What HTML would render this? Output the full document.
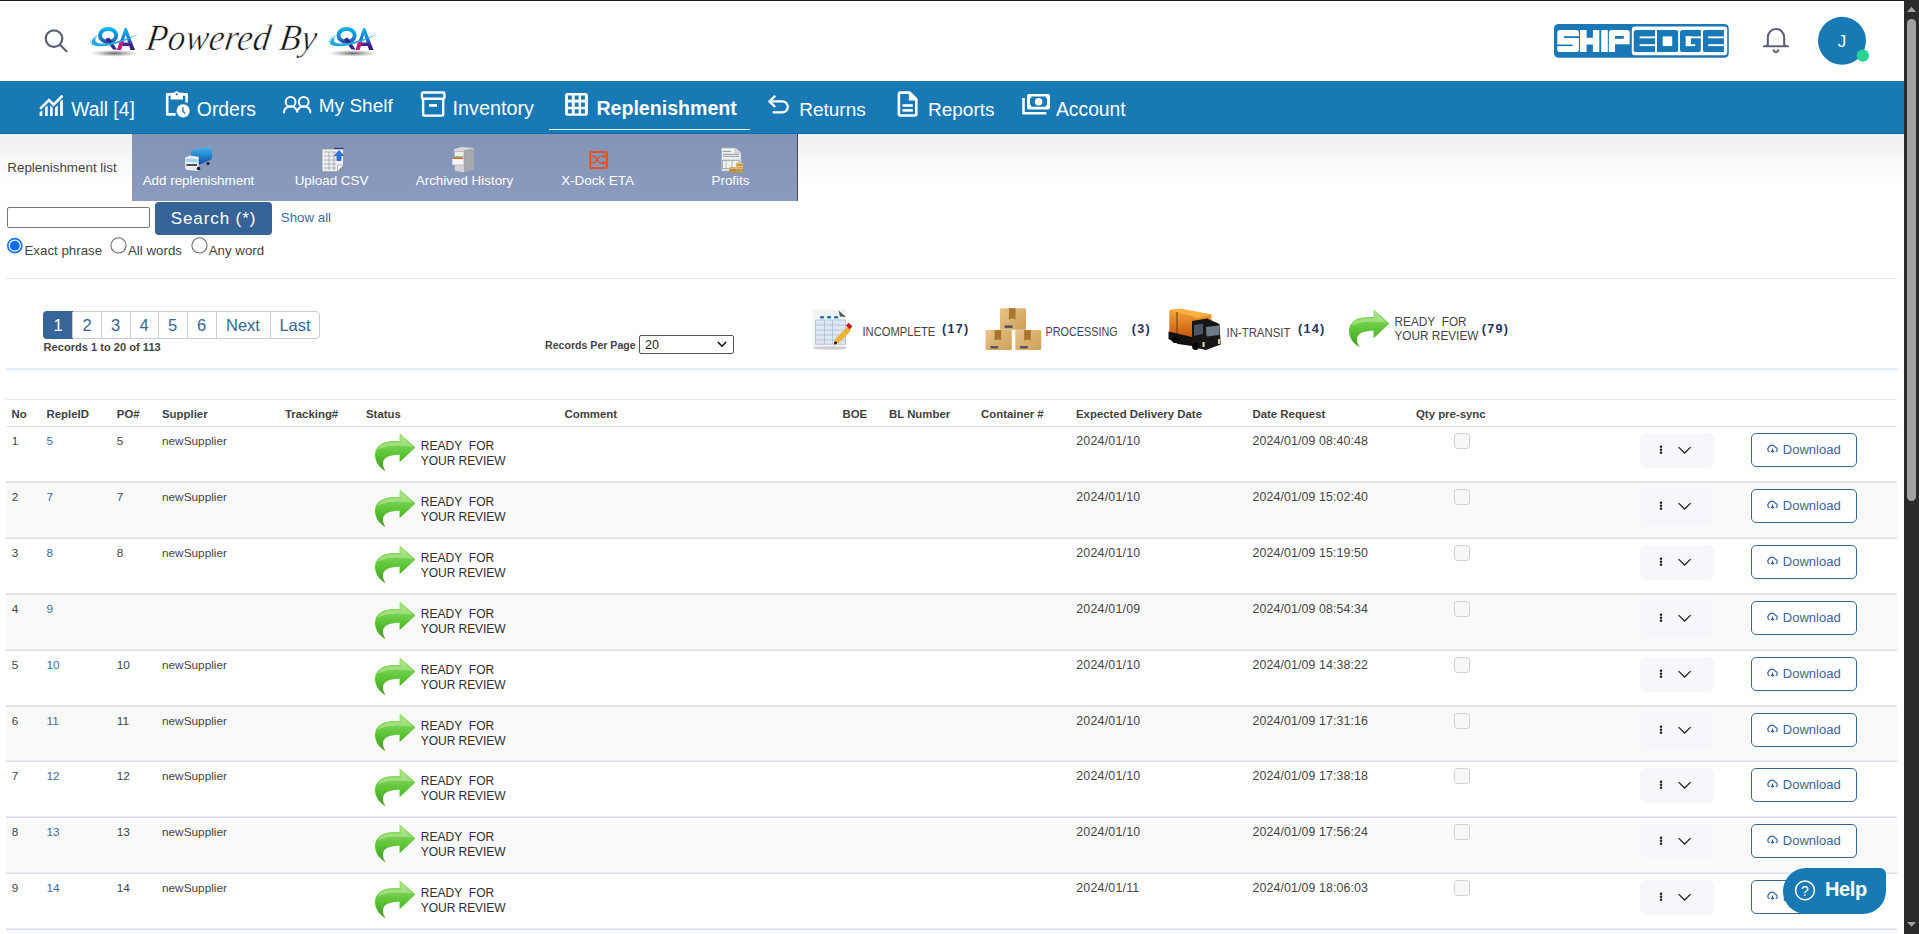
<!DOCTYPE html>
<html><head><meta charset="utf-8"><title>Replenishment</title>
<style>
html,body{margin:0;padding:0;}
body{width:1919px;height:934px;overflow:hidden;position:relative;background:#fff;font-family:"Liberation Sans",sans-serif;}
.t{position:absolute;white-space:nowrap;}
.r{position:absolute;}
svg.ov{position:absolute;left:0;top:0;width:1919px;height:934px;pointer-events:none;}
</style></head><body>

<div class="r" style="left:0px;top:0px;width:1904px;height:1px;background:#1f1f1f"></div>
<div class="r" style="left:0px;top:81px;width:1904px;height:53px;background:#1879b4"></div>
<div class="r" style="left:0px;top:133px;width:1904px;height:1px;background:#0f6ca8"></div>
<div class="r" style="left:549px;top:129px;width:201px;height:1px;background:#fff"></div>
<div class="r" style="left:0px;top:134px;width:1904px;height:48px;background:linear-gradient(#efefef,#ffffff)"></div>
<div class="r" style="left:132px;top:134px;width:665px;height:67px;background:linear-gradient(#8494b6,#8a9bbf)"></div>
<div class="r" style="left:797px;top:134px;width:1px;height:67px;background:#3c4660"></div>
<div class="r" style="left:7px;top:207px;width:143px;height:21px;box-sizing:border-box;border:1px solid #767676;border-radius:2px;background:#fff"></div>
<div class="r" style="left:155px;top:202px;width:117px;height:33px;background:#366499;border-radius:4px"></div>
<div class="r" style="left:6px;top:278px;width:1891px;height:1px;background:#e4eaf2"></div>
<div class="r" style="left:6px;top:368px;width:1891px;height:2px;background:#e4eaf2"></div>
<div class="r" style="left:6px;top:399px;width:1891px;height:1px;background:#e4eaf2"></div>
<div class="r" style="left:43px;top:311px;width:277px;height:28px;box-sizing:border-box;border:1px solid #c8ced6;border-radius:4px;background:#fff"></div>
<div class="r" style="left:43px;top:311px;width:30px;height:28px;background:#36659a;border-radius:4px 0 0 4px"></div>
<div class="r" style="left:101px;top:312px;width:1px;height:26px;background:#c8ced6"></div>
<div class="r" style="left:130px;top:312px;width:1px;height:26px;background:#c8ced6"></div>
<div class="r" style="left:158px;top:312px;width:1px;height:26px;background:#c8ced6"></div>
<div class="r" style="left:187px;top:312px;width:1px;height:26px;background:#c8ced6"></div>
<div class="r" style="left:216px;top:312px;width:1px;height:26px;background:#c8ced6"></div>
<div class="r" style="left:270px;top:312px;width:1px;height:26px;background:#c8ced6"></div>
<div class="r" style="left:72px;top:312px;width:1px;height:26px;background:#c8ced6"></div>
<div class="r" style="left:639px;top:335px;width:95px;height:19px;box-sizing:border-box;border:1px solid #555;border-radius:2px;background:#fff"></div>
<div class="r" style="left:6px;top:426px;width:1891px;height:1px;background:#dee2e6"></div>
<div class="r" style="left:6px;top:481px;width:1891px;height:1px;background:#e5ebf3"></div>
<div class="r" style="left:6px;top:482px;width:1891px;height:1px;background:#dde1e6"></div>
<div class="r" style="left:1454px;top:433px;width:16px;height:16px;box-sizing:border-box;border:1px solid #cfcfcf;border-radius:3.5px;background:#f7f7f7"></div>
<div class="r" style="left:1640px;top:433px;width:74px;height:35px;background:#f5f7fa;border-radius:6px"></div>
<div class="r" style="left:1751px;top:433px;width:106px;height:34px;box-sizing:border-box;border:1.3px solid #36659a;border-radius:5px;background:#fff"></div>
<div class="r" style="left:6px;top:483px;width:1891px;height:54px;background:#f9f9f9"></div>
<div class="r" style="left:6px;top:537px;width:1891px;height:1px;background:#e5ebf3"></div>
<div class="r" style="left:6px;top:538px;width:1891px;height:1px;background:#dde1e6"></div>
<div class="r" style="left:1454px;top:489px;width:16px;height:16px;box-sizing:border-box;border:1px solid #cfcfcf;border-radius:3.5px;background:#f7f7f7"></div>
<div class="r" style="left:1640px;top:489px;width:74px;height:35px;background:#f5f7fa;border-radius:6px"></div>
<div class="r" style="left:1751px;top:489px;width:106px;height:34px;box-sizing:border-box;border:1.3px solid #36659a;border-radius:5px;background:#fff"></div>
<div class="r" style="left:6px;top:593px;width:1891px;height:1px;background:#e5ebf3"></div>
<div class="r" style="left:6px;top:594px;width:1891px;height:1px;background:#dde1e6"></div>
<div class="r" style="left:1454px;top:545px;width:16px;height:16px;box-sizing:border-box;border:1px solid #cfcfcf;border-radius:3.5px;background:#f7f7f7"></div>
<div class="r" style="left:1640px;top:545px;width:74px;height:35px;background:#f5f7fa;border-radius:6px"></div>
<div class="r" style="left:1751px;top:545px;width:106px;height:34px;box-sizing:border-box;border:1.3px solid #36659a;border-radius:5px;background:#fff"></div>
<div class="r" style="left:6px;top:595px;width:1891px;height:54px;background:#f9f9f9"></div>
<div class="r" style="left:6px;top:649px;width:1891px;height:1px;background:#e5ebf3"></div>
<div class="r" style="left:6px;top:650px;width:1891px;height:1px;background:#dde1e6"></div>
<div class="r" style="left:1454px;top:601px;width:16px;height:16px;box-sizing:border-box;border:1px solid #cfcfcf;border-radius:3.5px;background:#f7f7f7"></div>
<div class="r" style="left:1640px;top:601px;width:74px;height:35px;background:#f5f7fa;border-radius:6px"></div>
<div class="r" style="left:1751px;top:601px;width:106px;height:34px;box-sizing:border-box;border:1.3px solid #36659a;border-radius:5px;background:#fff"></div>
<div class="r" style="left:6px;top:705px;width:1891px;height:1px;background:#e5ebf3"></div>
<div class="r" style="left:6px;top:706px;width:1891px;height:1px;background:#dde1e6"></div>
<div class="r" style="left:1454px;top:657px;width:16px;height:16px;box-sizing:border-box;border:1px solid #cfcfcf;border-radius:3.5px;background:#f7f7f7"></div>
<div class="r" style="left:1640px;top:657px;width:74px;height:35px;background:#f5f7fa;border-radius:6px"></div>
<div class="r" style="left:1751px;top:657px;width:106px;height:34px;box-sizing:border-box;border:1.3px solid #36659a;border-radius:5px;background:#fff"></div>
<div class="r" style="left:6px;top:707px;width:1891px;height:53px;background:#f9f9f9"></div>
<div class="r" style="left:6px;top:760px;width:1891px;height:1px;background:#e5ebf3"></div>
<div class="r" style="left:6px;top:761px;width:1891px;height:1px;background:#dde1e6"></div>
<div class="r" style="left:1454px;top:713px;width:16px;height:16px;box-sizing:border-box;border:1px solid #cfcfcf;border-radius:3.5px;background:#f7f7f7"></div>
<div class="r" style="left:1640px;top:713px;width:74px;height:35px;background:#f5f7fa;border-radius:6px"></div>
<div class="r" style="left:1751px;top:713px;width:106px;height:34px;box-sizing:border-box;border:1.3px solid #36659a;border-radius:5px;background:#fff"></div>
<div class="r" style="left:6px;top:816px;width:1891px;height:1px;background:#e5ebf3"></div>
<div class="r" style="left:6px;top:817px;width:1891px;height:1px;background:#dde1e6"></div>
<div class="r" style="left:1454px;top:768px;width:16px;height:16px;box-sizing:border-box;border:1px solid #cfcfcf;border-radius:3.5px;background:#f7f7f7"></div>
<div class="r" style="left:1640px;top:768px;width:74px;height:35px;background:#f5f7fa;border-radius:6px"></div>
<div class="r" style="left:1751px;top:768px;width:106px;height:34px;box-sizing:border-box;border:1.3px solid #36659a;border-radius:5px;background:#fff"></div>
<div class="r" style="left:6px;top:818px;width:1891px;height:54px;background:#f9f9f9"></div>
<div class="r" style="left:6px;top:872px;width:1891px;height:1px;background:#e5ebf3"></div>
<div class="r" style="left:6px;top:873px;width:1891px;height:1px;background:#dde1e6"></div>
<div class="r" style="left:1454px;top:824px;width:16px;height:16px;box-sizing:border-box;border:1px solid #cfcfcf;border-radius:3.5px;background:#f7f7f7"></div>
<div class="r" style="left:1640px;top:824px;width:74px;height:35px;background:#f5f7fa;border-radius:6px"></div>
<div class="r" style="left:1751px;top:824px;width:106px;height:34px;box-sizing:border-box;border:1.3px solid #36659a;border-radius:5px;background:#fff"></div>
<div class="r" style="left:6px;top:928px;width:1891px;height:1px;background:#e5ebf3"></div>
<div class="r" style="left:6px;top:929px;width:1891px;height:1px;background:#dde1e6"></div>
<div class="r" style="left:1454px;top:880px;width:16px;height:16px;box-sizing:border-box;border:1px solid #cfcfcf;border-radius:3.5px;background:#f7f7f7"></div>
<div class="r" style="left:1640px;top:880px;width:74px;height:35px;background:#f5f7fa;border-radius:6px"></div>
<div class="r" style="left:1751px;top:880px;width:106px;height:34px;box-sizing:border-box;border:1.3px solid #36659a;border-radius:5px;background:#fff"></div>
<div class="r" style="left:6px;top:930px;width:1891px;height:54px;background:#f9f9f9"></div>
<div class="r" style="left:6px;top:984px;width:1891px;height:1px;background:#e5ebf3"></div>
<div class="r" style="left:6px;top:985px;width:1891px;height:1px;background:#dde1e6"></div>
<svg class="ov" width="1919" height="934" viewBox="0 0 1919 934"><circle cx="54" cy="38.6" r="8.3" fill="none" stroke="#5d6272" stroke-width="2.3"/><line x1="60.3" y1="45" x2="66.4" y2="51.2" stroke="#5d6272" stroke-width="2.2" stroke-linecap="round"/><defs><linearGradient id="qagrad" gradientUnits="userSpaceOnUse" x1="0" y1="6" x2="0" y2="28"><stop offset="0" stop-color="#06b6ee"/><stop offset="0.5" stop-color="#1a7acb"/><stop offset="0.75" stop-color="#4a2390"/><stop offset="1" stop-color="#2a1f6e"/></linearGradient><radialGradient id="qashadow"><stop offset="0" stop-color="#000" stop-opacity="0.6"/><stop offset="0.5" stop-color="#000" stop-opacity="0.25"/><stop offset="1" stop-color="#000" stop-opacity="0"/></radialGradient></defs><g transform="translate(88,22)"><ellipse cx="26.5" cy="31.3" rx="24" ry="3.4" fill="url(#qashadow)"/><ellipse cx="20.1" cy="13.4" rx="8.1" ry="6.5" fill="none" stroke="url(#qagrad)" stroke-width="4"/><path d="M17.5 17 L21 15.5 L29 27.6 L25 27.6 Z" fill="#2b2a86"/><path fill-rule="evenodd" d="M29.1 27.9 L36.6 6.2 L38.8 6.2 L47 27.9 L42.6 27.9 L41.2 24 H34.2 L32.9 27.9 Z M35.3 20.4 H40.1 L37.7 12.6 Z" fill="url(#qagrad)"/><path d="M29.1 27.9 L31.9 18.6 L35.9 18.6 L32.9 27.9 Z" fill="#e0147e" opacity="0.9"/><path d="M50.9 11.8 C38 19.5, 20 26, 8 24 C1.5 22.8, 2.5 17.5, 9.5 14 C5.5 18, 7 21, 13 21.4 C25 22, 40 16.5, 50.9 11.8 Z" fill="#22aae6"/><path d="M9 13.5 C2 16.5, 1 21.5, 5.5 23.2" fill="none" stroke="#3fc0f0" stroke-width="0.7"/></g><g transform="translate(326.5,22)"><ellipse cx="26.5" cy="31.3" rx="24" ry="3.4" fill="url(#qashadow)"/><ellipse cx="20.1" cy="13.4" rx="8.1" ry="6.5" fill="none" stroke="url(#qagrad)" stroke-width="4"/><path d="M17.5 17 L21 15.5 L29 27.6 L25 27.6 Z" fill="#2b2a86"/><path fill-rule="evenodd" d="M29.1 27.9 L36.6 6.2 L38.8 6.2 L47 27.9 L42.6 27.9 L41.2 24 H34.2 L32.9 27.9 Z M35.3 20.4 H40.1 L37.7 12.6 Z" fill="url(#qagrad)"/><path d="M29.1 27.9 L31.9 18.6 L35.9 18.6 L32.9 27.9 Z" fill="#e0147e" opacity="0.9"/><path d="M50.9 11.8 C38 19.5, 20 26, 8 24 C1.5 22.8, 2.5 17.5, 9.5 14 C5.5 18, 7 21, 13 21.4 C25 22, 40 16.5, 50.9 11.8 Z" fill="#22aae6"/><path d="M9 13.5 C2 16.5, 1 21.5, 5.5 23.2" fill="none" stroke="#3fc0f0" stroke-width="0.7"/></g><rect x="1554" y="24" width="174.8" height="33.7" rx="4.5" fill="#1a78b6"/><rect x="1631.8" y="26.6" width="95.4" height="28.7" rx="3" fill="#fff"/><g fill="#fff"><rect x="1557.3" y="30.1" width="21.6" height="21.9" rx="2.6"/><rect x="1580" y="30.1" width="19.3" height="21.9"/><rect x="1601.2" y="30.1" width="6.6" height="21.9"/><rect x="1608.9" y="30.1" width="20.8" height="21.9" rx="2.6"/><rect x="1608.9" y="45" width="6.1" height="7"/></g><g fill="#1a78b6"><rect x="1564" y="36.2" width="15.5" height="1.8"/><rect x="1557" y="44.5" width="15.6" height="1.6"/><rect x="1586.6" y="29.5" width="6.3" height="8.3"/><rect x="1586.6" y="44.5" width="6.3" height="8"/><rect x="1615" y="36" width="8.8" height="2.8"/><rect x="1615" y="44.3" width="15" height="8.2"/></g><g fill="#1a78b6"><rect x="1633.7" y="29.9" width="21.4" height="22.2" rx="2.6"/><rect x="1640" y="29.9" width="15.1" height="22.2"/><rect x="1657" y="29.9" width="21.4" height="22.2" rx="3.2"/><rect x="1657" y="29.9" width="8" height="22.2"/><rect x="1680" y="29.9" width="20.9" height="22.2" rx="2.6"/><rect x="1690" y="29.9" width="10.9" height="6"/><rect x="1702.8" y="29.9" width="21.1" height="22.2" rx="2.6"/><rect x="1708.2" y="29.9" width="15.7" height="22.2"/></g><g fill="#fff"><rect x="1639.7" y="36.4" width="15.6" height="1.9"/><rect x="1639.7" y="44.2" width="15.6" height="1.9"/><rect x="1662.7" y="36.4" width="9.5" height="9.7"/><rect x="1685.7" y="36.4" width="15.4" height="1.9"/><rect x="1685.7" y="36.4" width="5.2" height="9.7"/><rect x="1685.7" y="44.2" width="9.5" height="1.9"/><rect x="1708.2" y="36.4" width="15.9" height="1.9"/><rect x="1708.2" y="44.2" width="15.9" height="1.9"/><rect x="1655.1" y="29.5" width="1.9" height="23"/><rect x="1678.4" y="29.5" width="1.6" height="23"/><rect x="1700.9" y="29.5" width="1.9" height="23"/></g><path d="M1767.8 44.5 V37.5 A8.2 8.6 0 0 1 1784.2 37.5 V44.5 L1786 46.2 M1764 46.2 H1788 M1766 46.2 L1767.8 44.5" fill="none" stroke="#5d6272" stroke-width="2.1" stroke-linecap="round" stroke-linejoin="round"/><path d="M1773.6 50.3 A2.4 2.2 0 0 0 1778.3 50.3" fill="none" stroke="#5d6272" stroke-width="2" stroke-linecap="round"/><circle cx="1842" cy="40.8" r="24" fill="#1879b4"/><circle cx="1862.8" cy="55.6" r="6.2" fill="#28d391" stroke="#fff" stroke-width="0"/><path d="M40.8 108.2 L49 100 L53.6 104.6 L61.7 96.5" fill="none" stroke="#fff" stroke-width="2.6" stroke-linecap="round" stroke-linejoin="miter"/><path fill="#fff" d="M39.6 116 V112.2 L42.4 110.6 V116 Z M45 116 V107.4 L47.7 105.4 V116 Z M50 116 V105.6 L52.7 107.6 V116 Z M55 116 V107.6 L57.8 105.4 V116 Z M60.1 116 V101.6 L62.9 99.6 V116 Z"/><path d="M170.6 94.4 H167.2 V114.4 H175.6 M182.6 94.4 H186.6 V102.6" fill="none" stroke="#fff" stroke-width="2.6" stroke-linejoin="round"/><path fill="#fff" d="M170.6 92.8 H174.2 A2.8 2.6 0 0 1 179.4 92.8 H183 V99.6 H170.6 Z"/><circle cx="176.8" cy="94.3" r="1.1" fill="#1879b4"/><circle cx="183.1" cy="110.8" r="6.6" fill="#fff"/><path d="M182.9 107.2 V111.2 L185.2 113.4" fill="none" stroke="#1879b4" stroke-width="1.4"/><circle cx="290.6" cy="101.9" r="4.9" fill="none" stroke="#fff" stroke-width="2"/><circle cx="303.7" cy="101.9" r="4.9" fill="none" stroke="#fff" stroke-width="2"/><path d="M284 112.6 A6.6 6.4 0 0 1 297.2 112.6 A6.6 6.4 0 0 1 310.4 112.6" fill="none" stroke="#fff" stroke-width="2" stroke-linecap="round"/><rect x="421.9" y="92.5" width="22.5" height="6.2" rx="1.2" fill="none" stroke="#fff" stroke-width="2.4"/><path d="M423.1 98.7 V114.3 Q423.1 115.6 424.4 115.6 H441.9 Q443.2 115.6 443.2 114.3 V98.7" fill="none" stroke="#fff" stroke-width="2.4"/><rect x="429" y="104.1" width="8" height="2.7" fill="#fff"/><rect x="565.1" y="93" width="22.8" height="22.7" rx="2.2" fill="#fff"/><rect x="567.9" y="95.5" width="3.9" height="4.2" fill="#1879b4"/><rect x="567.9" y="102.6" width="3.9" height="4.2" fill="#1879b4"/><rect x="567.9" y="109.3" width="3.9" height="4.2" fill="#1879b4"/><rect x="574.7" y="95.5" width="3.9" height="4.2" fill="#1879b4"/><rect x="574.7" y="102.6" width="3.9" height="4.2" fill="#1879b4"/><rect x="574.7" y="109.3" width="3.9" height="4.2" fill="#1879b4"/><rect x="581.0" y="95.5" width="3.9" height="4.2" fill="#1879b4"/><rect x="581.0" y="102.6" width="3.9" height="4.2" fill="#1879b4"/><rect x="581.0" y="109.3" width="3.9" height="4.2" fill="#1879b4"/><path d="M775.2 95.8 L769.5 101.4 L775.2 107 M769.5 101.4 H782.4 A5.4 5.45 0 0 1 782.4 112.3 H772.6" fill="none" stroke="#fff" stroke-width="2.3" stroke-linecap="butt" stroke-linejoin="miter"/><path d="M909.8 92.6 H900.4 Q898.9 92.6 898.9 94.1 V114 Q898.9 115.5 900.4 115.5 H914.8 Q916.3 115.5 916.3 114 V99.2 Z" fill="none" stroke="#fff" stroke-width="2.6" stroke-linejoin="round"/><path d="M908.8 92.4 V100.6 H917 Z" fill="#fff"/><rect x="902.4" y="104.2" width="10.4" height="2.6" fill="#fff"/><rect x="902.4" y="109.1" width="10.4" height="2.6" fill="#fff"/><path fill="#fff" fill-rule="evenodd" d="M1029 94 H1048 Q1050 94 1050 96 V107.6 Q1050 109.6 1048 109.6 H1029 Q1027 109.6 1027 107.6 V96 Q1027 94 1029 94 Z M1031.4 96.4 Q1031.4 98.4 1030 98.4 V104.8 Q1031.4 104.8 1031.4 106.8 H1045.7 Q1045.7 104.8 1047.1 104.8 V98.4 Q1045.7 98.4 1045.7 96.4 Z"/><circle cx="1038.6" cy="101.7" r="3.8" fill="#fff"/><path d="M1023.5 97.9 V113.2 H1046.3" fill="none" stroke="#fff" stroke-width="2.6"/><defs><linearGradient id="tbox" x1="0" y1="0" x2="0" y2="1"><stop offset="0" stop-color="#3fb2ee"/><stop offset="1" stop-color="#0a4fa8"/></linearGradient></defs><path d="M191 151.2 L204 147.6 L212 148.6 V159 L199 164.8 L191 164.7 Z" fill="url(#tbox)"/><path d="M185.2 157.5 L190 155.6 L198.7 156.8 V171 L187 170 Q185.2 169.5 185.2 168 Z" fill="#e8ebef"/><path d="M186.3 158.5 L197.5 159.5 V162.5 L186.3 161.7 Z" fill="#9fd3f2"/><path d="M186.5 164 H197 V166 H186.5 Z" fill="#444c58"/><circle cx="198.5" cy="168.5" r="1.8" fill="#222"/><circle cx="208" cy="163.5" r="1.6" fill="#222"/><path d="M322 149 H343.5 V165 L337.5 171.8 H322 Z" fill="#eef0f2" stroke="#8b8f95" stroke-width="0.8"/><path d="M324 152 H336 M324 156 H336 M324 160 H338 M324 164 H336 M324 168 H336 M329 152 V170 M334 152 V170" stroke="#9ca2a8" stroke-width="0.8"/><path d="M337.5 171.8 L343.5 165 H337.5 Z" fill="#ffffff" stroke="#8b8f95" stroke-width="0.6"/><path d="M339 150.5 L343.5 155.5 H341 V160.5 H337 V155.5 H334.5 Z" fill="#1d7fe0" stroke="#3a3fb0" stroke-width="0.7"/><rect x="334" y="147.8" width="9.5" height="1.1" fill="#2a2aa8"/><path d="M454 149 L462 147 L473.9 148 V169 L464 172.3 L455 171 Z" fill="#d9dadd"/><path d="M464 150 L473.9 148.4 V169 L464 172.3 Z" fill="#a5a8ad"/><path d="M454.5 151.5 H464 V156.5 H454.5 Z" fill="#eceef0" stroke="#8f9398" stroke-width="0.5"/><path d="M452 158.5 H464 V165 H452 Z" fill="#f4f5f6" stroke="#8f9398" stroke-width="0.5"/><path d="M453 157.3 H463 V159 H453 Z" fill="#f25c1f"/><path d="M456 156.6 H460 V157.6 H456 Z" fill="#55c23a"/><path d="M455 166.5 H464 V171 H455 Z" fill="#cfd1d4"/><rect x="590.2" y="152.1" width="16.6" height="15.8" rx="1" fill="none" stroke="#e9521f" stroke-width="2"/><path d="M591.2 156.3 H594.3 L599.5 163 H604 M591.2 162.8 H594.3 L599.5 156.3 H604" fill="none" stroke="#e9521f" stroke-width="1.3"/><path d="M603.2 154 L606.2 156.3 L603.2 158.6 Z M603.2 160.6 L606.2 163 L603.2 165.3 Z" fill="#e9521f"/><path d="M721.5 148 H735.5 L741 153 V171 H721.5 Z" fill="#eef2f3" stroke="#a9b0b3" stroke-width="0.7"/><path d="M735.5 148 V153 H741" fill="#d6dcdf" stroke="#a9b0b3" stroke-width="0.5"/><path d="M722.8 151.4 H731 M722.8 154.3 H739 M722.8 156.3 H739" stroke="#6d7377" stroke-width="0.7"/><rect x="722.3" y="160.2" width="16.8" height="8.5" fill="none" stroke="#8b9396" stroke-width="0.8"/><path d="M726 160.2 V168.7 M732 160.2 V168.7" stroke="#8b9396" stroke-width="0.6"/><rect x="736.2" y="162.4" width="6.8" height="10.3" rx="1" fill="#c29a4e"/><rect x="729.2" y="167.3" width="7.2" height="5.5" rx="1" fill="#b98f44"/><path d="M736.2 163.6 H743 M729.2 168.2 H743 M736.2 166.5 H743" stroke="#f0d48c" stroke-width="0.8"/><circle cx="14.8" cy="245.7" r="7" fill="#fff" stroke="#1a73e8" stroke-width="1.7"/><circle cx="14.8" cy="245.7" r="4.9" fill="#0d6efd"/><circle cx="118.5" cy="245.4" r="7.6" fill="#fff" stroke="#6a6a6a" stroke-width="1.1"/><circle cx="199.5" cy="245.4" r="7.6" fill="#fff" stroke="#6a6a6a" stroke-width="1.1"/><path d="M717.8 342 L722 346.2 L726.2 342" fill="none" stroke="#111" stroke-width="1.6"/><defs><linearGradient id="boxg" x1="0" y1="0" x2="1" y2="1"><stop offset="0" stop-color="#e8c48a"/><stop offset="1" stop-color="#cf9f55"/></linearGradient><linearGradient id="arrowg" x1="0" y1="0" x2="0" y2="1"><stop offset="0" stop-color="#9ee07a"/><stop offset="0.55" stop-color="#5cc436"/><stop offset="1" stop-color="#3e9e1c"/></linearGradient><linearGradient id="cargo" x1="0" y1="0" x2="0" y2="1"><stop offset="0" stop-color="#f6a93a"/><stop offset="1" stop-color="#c9560f"/></linearGradient></defs><rect x="812.7" y="309.5" width="33.5" height="39" fill="#f3f3f3"/><ellipse cx="830" cy="348" rx="17" ry="1.6" fill="#bbb" opacity="0.7"/><rect x="815.6" y="320" width="30" height="24.2" fill="#dfe8f2" stroke="#a9bdd3" stroke-width="0.8"/><path d="M815.6 325 H845.6 M815.6 330 H845.6 M815.6 335 H845.6 M815.6 340 H845.6 M824.5 320 V344.2 M832.5 320 V344.2" stroke="#a9bdd3" stroke-width="0.8"/><rect x="820" y="316" width="4.2" height="2.6" rx="1" fill="#1a78c0"/><rect x="827" y="316" width="4.2" height="2.6" rx="1" fill="#1a78c0"/><rect x="834" y="316" width="4.2" height="2.6" rx="1" fill="#1a78c0"/><path d="M838.5 310.5 L846 317 L840 316.5 Z" fill="#555"/><path d="M834.8 339.5 L847.2 327 L851 330.8 L838.6 343.3 L834 344.5 Z" fill="#f0b13a"/><path d="M845.8 325.6 L848.6 322.8 L852.4 326.6 L849.6 329.4 Z" fill="#c21f1f"/><circle cx="835.5" cy="343" r="1.4" fill="#111"/><rect x="1000" y="308.2" width="26" height="21.5" rx="1.2" fill="url(#boxg)"/><path d="M1008.9200000000001 308.2 H1015.52 V319.38 L1012.22 318.305 L1008.9200000000001 319.38 Z" fill="#a8762f"/><rect x="1004.68" y="325.4" width="7.8" height="2.58" fill="#4d5565"/><rect x="985.6" y="330" width="26.2" height="20" rx="1.2" fill="url(#boxg)"/><path d="M994.614 330 H1001.2139999999999 V340.4 L997.914 339.4 L994.614 340.4 Z" fill="#a8762f"/><rect x="990.316" y="346.0" width="7.859999999999999" height="2.4" fill="#4d5565"/><rect x="1015.3" y="330" width="25.9" height="20" rx="1.2" fill="url(#boxg)"/><path d="M1024.173 330 H1030.773 V340.4 L1027.473 339.4 L1024.173 340.4 Z" fill="#a8762f"/><rect x="1019.962" y="346.0" width="7.77" height="2.4" fill="#4d5565"/><path d="M1169.3 310 L1180 308.8 L1211.4 314.5 V331 L1192 337.3 L1169.3 333 Z" fill="url(#cargo)"/><path d="M1169.3 310 L1180 308.8 L1211.4 314.5 L1199 318 Z" fill="#f8b040"/><path d="M1177 312 V334.5" stroke="#6b3a0c" stroke-width="1"/><path d="M1168.5 331.5 L1192 337 V346 L1178 344 L1168.5 339 Z" fill="#111"/><path d="M1192 321 L1207 318.6 L1219.5 324 L1220.7 344.5 L1206 350 L1192 347 Z" fill="#161616"/><path d="M1206 327 L1219 325.5 L1219.5 335 L1206.5 336.5 Z" fill="#6f7a88"/><path d="M1194 325 L1203 323.5 L1203 334 L1194 336 Z" fill="#4b5563"/><circle cx="1175" cy="340" r="3" fill="#000"/><circle cx="1195.5" cy="346.5" r="3.4" fill="#000"/><rect x="1202.5" y="342" width="2.2" height="5" fill="#d9cf9a"/><rect x="1218" y="339" width="2" height="5" fill="#d9cf9a"/><g transform="translate(1349,309.2) scale(1.0)"><path d="M24.6 7.8 L24.6 0 L40.4 14.4 L24.6 29 L24.6 21.5 C16 21.5, 8.6 23.4, 8 29.6 C7.8 33, 9 36, 10.8 38.3 C4 34.2, 0 28.5, 0 21.6 C0 13, 8 7.8, 18 7.8 Z" fill="url(#arrowg)"/><path d="M2.5 17 C5 11, 10 9.2, 18 9.2 L25.6 9.2 L25.6 2.4 L37.5 13.4 L25.6 12.6 C16 12.4, 7 13.6, 2.5 17 Z" fill="#c4f0a2" opacity="0.5"/></g><g transform="translate(375,433.2) scale(1.0)"><path d="M24.6 7.8 L24.6 0 L40.4 14.4 L24.6 29 L24.6 21.5 C16 21.5, 8.6 23.4, 8 29.6 C7.8 33, 9 36, 10.8 38.3 C4 34.2, 0 28.5, 0 21.6 C0 13, 8 7.8, 18 7.8 Z" fill="url(#arrowg)"/><path d="M2.5 17 C5 11, 10 9.2, 18 9.2 L25.6 9.2 L25.6 2.4 L37.5 13.4 L25.6 12.6 C16 12.4, 7 13.6, 2.5 17 Z" fill="#c4f0a2" opacity="0.5"/></g><circle cx="1661" cy="446.8" r="1.25" fill="#222"/><circle cx="1661" cy="449.7" r="1.25" fill="#222"/><circle cx="1661" cy="452.7" r="1.25" fill="#222"/><path d="M1678.6 447.1 L1684.6 453 L1690.6 447.1" fill="none" stroke="#222" stroke-width="1.3"/><path d="M1769.5 451.8 A2.6 2.6 0 0 1 1768.6 447.5 A3.6 3.6 0 0 1 1775.4 447.4 A2.3 2.3 0 0 1 1775.8 451.8" fill="none" stroke="#36659a" stroke-width="1.2"/><path d="M1772.5 448.5 V452.2 M1770.8 450.6 L1772.5 452.3 L1774.2 450.6" fill="none" stroke="#36659a" stroke-width="1.1"/><g transform="translate(375,489.2) scale(1.0)"><path d="M24.6 7.8 L24.6 0 L40.4 14.4 L24.6 29 L24.6 21.5 C16 21.5, 8.6 23.4, 8 29.6 C7.8 33, 9 36, 10.8 38.3 C4 34.2, 0 28.5, 0 21.6 C0 13, 8 7.8, 18 7.8 Z" fill="url(#arrowg)"/><path d="M2.5 17 C5 11, 10 9.2, 18 9.2 L25.6 9.2 L25.6 2.4 L37.5 13.4 L25.6 12.6 C16 12.4, 7 13.6, 2.5 17 Z" fill="#c4f0a2" opacity="0.5"/></g><circle cx="1661" cy="502.8" r="1.25" fill="#222"/><circle cx="1661" cy="505.7" r="1.25" fill="#222"/><circle cx="1661" cy="508.7" r="1.25" fill="#222"/><path d="M1678.6 503.1 L1684.6 509 L1690.6 503.1" fill="none" stroke="#222" stroke-width="1.3"/><path d="M1769.5 507.8 A2.6 2.6 0 0 1 1768.6 503.5 A3.6 3.6 0 0 1 1775.4 503.4 A2.3 2.3 0 0 1 1775.8 507.8" fill="none" stroke="#36659a" stroke-width="1.2"/><path d="M1772.5 504.5 V508.2 M1770.8 506.6 L1772.5 508.3 L1774.2 506.6" fill="none" stroke="#36659a" stroke-width="1.1"/><g transform="translate(375,545.2) scale(1.0)"><path d="M24.6 7.8 L24.6 0 L40.4 14.4 L24.6 29 L24.6 21.5 C16 21.5, 8.6 23.4, 8 29.6 C7.8 33, 9 36, 10.8 38.3 C4 34.2, 0 28.5, 0 21.6 C0 13, 8 7.8, 18 7.8 Z" fill="url(#arrowg)"/><path d="M2.5 17 C5 11, 10 9.2, 18 9.2 L25.6 9.2 L25.6 2.4 L37.5 13.4 L25.6 12.6 C16 12.4, 7 13.6, 2.5 17 Z" fill="#c4f0a2" opacity="0.5"/></g><circle cx="1661" cy="558.8" r="1.25" fill="#222"/><circle cx="1661" cy="561.7" r="1.25" fill="#222"/><circle cx="1661" cy="564.7" r="1.25" fill="#222"/><path d="M1678.6 559.1 L1684.6 565 L1690.6 559.1" fill="none" stroke="#222" stroke-width="1.3"/><path d="M1769.5 563.8 A2.6 2.6 0 0 1 1768.6 559.5 A3.6 3.6 0 0 1 1775.4 559.4 A2.3 2.3 0 0 1 1775.8 563.8" fill="none" stroke="#36659a" stroke-width="1.2"/><path d="M1772.5 560.5 V564.2 M1770.8 562.6 L1772.5 564.3 L1774.2 562.6" fill="none" stroke="#36659a" stroke-width="1.1"/><g transform="translate(375,601.2) scale(1.0)"><path d="M24.6 7.8 L24.6 0 L40.4 14.4 L24.6 29 L24.6 21.5 C16 21.5, 8.6 23.4, 8 29.6 C7.8 33, 9 36, 10.8 38.3 C4 34.2, 0 28.5, 0 21.6 C0 13, 8 7.8, 18 7.8 Z" fill="url(#arrowg)"/><path d="M2.5 17 C5 11, 10 9.2, 18 9.2 L25.6 9.2 L25.6 2.4 L37.5 13.4 L25.6 12.6 C16 12.4, 7 13.6, 2.5 17 Z" fill="#c4f0a2" opacity="0.5"/></g><circle cx="1661" cy="614.8" r="1.25" fill="#222"/><circle cx="1661" cy="617.7" r="1.25" fill="#222"/><circle cx="1661" cy="620.7" r="1.25" fill="#222"/><path d="M1678.6 615.1 L1684.6 621 L1690.6 615.1" fill="none" stroke="#222" stroke-width="1.3"/><path d="M1769.5 619.8 A2.6 2.6 0 0 1 1768.6 615.5 A3.6 3.6 0 0 1 1775.4 615.4 A2.3 2.3 0 0 1 1775.8 619.8" fill="none" stroke="#36659a" stroke-width="1.2"/><path d="M1772.5 616.5 V620.2 M1770.8 618.6 L1772.5 620.3 L1774.2 618.6" fill="none" stroke="#36659a" stroke-width="1.1"/><g transform="translate(375,657.2) scale(1.0)"><path d="M24.6 7.8 L24.6 0 L40.4 14.4 L24.6 29 L24.6 21.5 C16 21.5, 8.6 23.4, 8 29.6 C7.8 33, 9 36, 10.8 38.3 C4 34.2, 0 28.5, 0 21.6 C0 13, 8 7.8, 18 7.8 Z" fill="url(#arrowg)"/><path d="M2.5 17 C5 11, 10 9.2, 18 9.2 L25.6 9.2 L25.6 2.4 L37.5 13.4 L25.6 12.6 C16 12.4, 7 13.6, 2.5 17 Z" fill="#c4f0a2" opacity="0.5"/></g><circle cx="1661" cy="670.8" r="1.25" fill="#222"/><circle cx="1661" cy="673.7" r="1.25" fill="#222"/><circle cx="1661" cy="676.7" r="1.25" fill="#222"/><path d="M1678.6 671.1 L1684.6 677 L1690.6 671.1" fill="none" stroke="#222" stroke-width="1.3"/><path d="M1769.5 675.8 A2.6 2.6 0 0 1 1768.6 671.5 A3.6 3.6 0 0 1 1775.4 671.4 A2.3 2.3 0 0 1 1775.8 675.8" fill="none" stroke="#36659a" stroke-width="1.2"/><path d="M1772.5 672.5 V676.2 M1770.8 674.6 L1772.5 676.3 L1774.2 674.6" fill="none" stroke="#36659a" stroke-width="1.1"/><g transform="translate(375,713.2) scale(1.0)"><path d="M24.6 7.8 L24.6 0 L40.4 14.4 L24.6 29 L24.6 21.5 C16 21.5, 8.6 23.4, 8 29.6 C7.8 33, 9 36, 10.8 38.3 C4 34.2, 0 28.5, 0 21.6 C0 13, 8 7.8, 18 7.8 Z" fill="url(#arrowg)"/><path d="M2.5 17 C5 11, 10 9.2, 18 9.2 L25.6 9.2 L25.6 2.4 L37.5 13.4 L25.6 12.6 C16 12.4, 7 13.6, 2.5 17 Z" fill="#c4f0a2" opacity="0.5"/></g><circle cx="1661" cy="726.8" r="1.25" fill="#222"/><circle cx="1661" cy="729.7" r="1.25" fill="#222"/><circle cx="1661" cy="732.7" r="1.25" fill="#222"/><path d="M1678.6 727.1 L1684.6 733 L1690.6 727.1" fill="none" stroke="#222" stroke-width="1.3"/><path d="M1769.5 731.8 A2.6 2.6 0 0 1 1768.6 727.5 A3.6 3.6 0 0 1 1775.4 727.4 A2.3 2.3 0 0 1 1775.8 731.8" fill="none" stroke="#36659a" stroke-width="1.2"/><path d="M1772.5 728.5 V732.2 M1770.8 730.6 L1772.5 732.3 L1774.2 730.6" fill="none" stroke="#36659a" stroke-width="1.1"/><g transform="translate(375,768.2) scale(1.0)"><path d="M24.6 7.8 L24.6 0 L40.4 14.4 L24.6 29 L24.6 21.5 C16 21.5, 8.6 23.4, 8 29.6 C7.8 33, 9 36, 10.8 38.3 C4 34.2, 0 28.5, 0 21.6 C0 13, 8 7.8, 18 7.8 Z" fill="url(#arrowg)"/><path d="M2.5 17 C5 11, 10 9.2, 18 9.2 L25.6 9.2 L25.6 2.4 L37.5 13.4 L25.6 12.6 C16 12.4, 7 13.6, 2.5 17 Z" fill="#c4f0a2" opacity="0.5"/></g><circle cx="1661" cy="781.8" r="1.25" fill="#222"/><circle cx="1661" cy="784.7" r="1.25" fill="#222"/><circle cx="1661" cy="787.7" r="1.25" fill="#222"/><path d="M1678.6 782.1 L1684.6 788 L1690.6 782.1" fill="none" stroke="#222" stroke-width="1.3"/><path d="M1769.5 786.8 A2.6 2.6 0 0 1 1768.6 782.5 A3.6 3.6 0 0 1 1775.4 782.4 A2.3 2.3 0 0 1 1775.8 786.8" fill="none" stroke="#36659a" stroke-width="1.2"/><path d="M1772.5 783.5 V787.2 M1770.8 785.6 L1772.5 787.3 L1774.2 785.6" fill="none" stroke="#36659a" stroke-width="1.1"/><g transform="translate(375,824.2) scale(1.0)"><path d="M24.6 7.8 L24.6 0 L40.4 14.4 L24.6 29 L24.6 21.5 C16 21.5, 8.6 23.4, 8 29.6 C7.8 33, 9 36, 10.8 38.3 C4 34.2, 0 28.5, 0 21.6 C0 13, 8 7.8, 18 7.8 Z" fill="url(#arrowg)"/><path d="M2.5 17 C5 11, 10 9.2, 18 9.2 L25.6 9.2 L25.6 2.4 L37.5 13.4 L25.6 12.6 C16 12.4, 7 13.6, 2.5 17 Z" fill="#c4f0a2" opacity="0.5"/></g><circle cx="1661" cy="837.8" r="1.25" fill="#222"/><circle cx="1661" cy="840.7" r="1.25" fill="#222"/><circle cx="1661" cy="843.7" r="1.25" fill="#222"/><path d="M1678.6 838.1 L1684.6 844 L1690.6 838.1" fill="none" stroke="#222" stroke-width="1.3"/><path d="M1769.5 842.8 A2.6 2.6 0 0 1 1768.6 838.5 A3.6 3.6 0 0 1 1775.4 838.4 A2.3 2.3 0 0 1 1775.8 842.8" fill="none" stroke="#36659a" stroke-width="1.2"/><path d="M1772.5 839.5 V843.2 M1770.8 841.6 L1772.5 843.3 L1774.2 841.6" fill="none" stroke="#36659a" stroke-width="1.1"/><g transform="translate(375,880.2) scale(1.0)"><path d="M24.6 7.8 L24.6 0 L40.4 14.4 L24.6 29 L24.6 21.5 C16 21.5, 8.6 23.4, 8 29.6 C7.8 33, 9 36, 10.8 38.3 C4 34.2, 0 28.5, 0 21.6 C0 13, 8 7.8, 18 7.8 Z" fill="url(#arrowg)"/><path d="M2.5 17 C5 11, 10 9.2, 18 9.2 L25.6 9.2 L25.6 2.4 L37.5 13.4 L25.6 12.6 C16 12.4, 7 13.6, 2.5 17 Z" fill="#c4f0a2" opacity="0.5"/></g><circle cx="1661" cy="893.8" r="1.25" fill="#222"/><circle cx="1661" cy="896.7" r="1.25" fill="#222"/><circle cx="1661" cy="899.7" r="1.25" fill="#222"/><path d="M1678.6 894.1 L1684.6 900 L1690.6 894.1" fill="none" stroke="#222" stroke-width="1.3"/><path d="M1769.5 898.8 A2.6 2.6 0 0 1 1768.6 894.5 A3.6 3.6 0 0 1 1775.4 894.4 A2.3 2.3 0 0 1 1775.8 898.8" fill="none" stroke="#36659a" stroke-width="1.2"/><path d="M1772.5 895.5 V899.2 M1770.8 897.6 L1772.5 899.3 L1774.2 897.6" fill="none" stroke="#36659a" stroke-width="1.1"/></svg>
<div class="t" style="left:150px;top:16px;font-family:'Liberation Serif',serif;font-style:italic;font-size:37px;line-height:44px;color:#111;-webkit-text-stroke:0.55px #fff;letter-spacing:0.5px;transform:skewX(-8deg) scaleX(0.93);transform-origin:left top;">Powered By</div>
<div class="t" style="left:1542px;width:600px;text-align:center;top:32.61px;font-size:17px;line-height:17px;font-weight:400;color:#fff;">J</div>
<div class="t" style="left:71.2px;top:99.66px;font-size:19.3px;line-height:19.3px;font-weight:400;color:#ffffff;">Wall [4]</div>
<div class="t" style="left:196.8px;top:99.58px;font-size:19.4px;line-height:19.4px;font-weight:400;color:#ffffff;">Orders</div>
<div class="t" style="left:318.8px;top:95.92px;font-size:19px;line-height:19px;font-weight:400;color:#ffffff;">My Shelf</div>
<div class="t" style="left:452.6px;top:99.24px;font-size:19.8px;line-height:19.8px;font-weight:400;color:#ffffff;">Inventory</div>
<div class="t" style="left:596.4px;top:99.41px;font-size:19.6px;line-height:19.6px;font-weight:700;color:#ffffff;">Replenishment</div>
<div class="t" style="left:799.2px;top:99.92px;font-size:19px;line-height:19px;font-weight:400;color:#ffffff;">Returns</div>
<div class="t" style="left:928px;top:99.92px;font-size:19px;line-height:19px;font-weight:400;color:#ffffff;">Reports</div>
<div class="t" style="left:1056px;top:99.66px;font-size:19.3px;line-height:19.3px;font-weight:400;color:#ffffff;">Account</div>
<div class="t" style="left:7.3px;top:160.56px;font-size:13.4px;line-height:13.4px;font-weight:400;color:#444;">Replenishment list</div>
<div class="t" style="left:-101.5px;width:600px;text-align:center;top:173.66px;font-size:13.4px;line-height:13.4px;font-weight:400;color:#fff;">Add replenishment</div>
<div class="t" style="left:31.5px;width:600px;text-align:center;top:173.66px;font-size:13.4px;line-height:13.4px;font-weight:400;color:#fff;">Upload CSV</div>
<div class="t" style="left:164.5px;width:600px;text-align:center;top:173.66px;font-size:13.4px;line-height:13.4px;font-weight:400;color:#fff;">Archived History</div>
<div class="t" style="left:297.5px;width:600px;text-align:center;top:173.66px;font-size:13.4px;line-height:13.4px;font-weight:400;color:#fff;">X-Dock ETA</div>
<div class="t" style="left:430.5px;width:600px;text-align:center;top:173.66px;font-size:13.4px;line-height:13.4px;font-weight:400;color:#fff;">Profits</div>
<div class="t" style="left:-86.5px;width:600px;text-align:center;top:209.81px;font-size:17px;line-height:17px;font-weight:400;color:#fff;letter-spacing:0.9px;">Search (*)</div>
<div class="t" style="left:280.8px;top:210.74px;font-size:13.3px;line-height:13.3px;font-weight:400;color:#3b6ca3;">Show all</div>
<div class="t" style="left:24.5px;top:244.24px;font-size:13.3px;line-height:13.3px;font-weight:400;color:#444;">Exact phrase</div>
<div class="t" style="left:128px;top:244.24px;font-size:13.3px;line-height:13.3px;font-weight:400;color:#444;">All words</div>
<div class="t" style="left:208.7px;top:244.24px;font-size:13.3px;line-height:13.3px;font-weight:400;color:#444;">Any word</div>
<div class="t" style="left:-242.0px;width:600px;text-align:center;top:316.53px;font-size:16.5px;line-height:16.5px;font-weight:400;color:#fff;">1</div>
<div class="t" style="left:-213.0px;width:600px;text-align:center;top:316.53px;font-size:16.5px;line-height:16.5px;font-weight:400;color:#36659a;">2</div>
<div class="t" style="left:-184.5px;width:600px;text-align:center;top:316.53px;font-size:16.5px;line-height:16.5px;font-weight:400;color:#36659a;">3</div>
<div class="t" style="left:-156.0px;width:600px;text-align:center;top:316.53px;font-size:16.5px;line-height:16.5px;font-weight:400;color:#36659a;">4</div>
<div class="t" style="left:-127.5px;width:600px;text-align:center;top:316.53px;font-size:16.5px;line-height:16.5px;font-weight:400;color:#36659a;">5</div>
<div class="t" style="left:-98.5px;width:600px;text-align:center;top:316.53px;font-size:16.5px;line-height:16.5px;font-weight:400;color:#36659a;">6</div>
<div class="t" style="left:-57.0px;width:600px;text-align:center;top:316.53px;font-size:16.5px;line-height:16.5px;font-weight:400;color:#36659a;">Next</div>
<div class="t" style="left:-5.0px;width:600px;text-align:center;top:316.53px;font-size:16.5px;line-height:16.5px;font-weight:400;color:#36659a;">Last</div>
<div class="t" style="left:43.6px;top:342.20px;font-size:11.1px;line-height:11.1px;font-weight:700;color:#444;">Records 1 to 20 of 113</div>
<div class="t" style="left:545px;top:339.73px;font-size:10.6px;line-height:10.6px;font-weight:700;color:#444;">Records Per Page</div>
<div class="t" style="left:645px;top:339.42px;font-size:12.5px;line-height:12.5px;font-weight:400;color:#222;">20</div>
<div class="t" style="left:862.5px;top:326.82px;font-size:11.2px;line-height:11.2px;font-weight:400;color:#444;transform:scaleY(1.15);transform-origin:left bottom;">INCOMPLETE</div>
<div class="t" style="left:942px;top:323.33px;font-size:12.6px;line-height:12.6px;font-weight:700;color:#1f3560;letter-spacing:1.3px;">(17)</div>
<div class="t" style="left:1045.6px;top:326.66px;font-size:10.8px;line-height:10.8px;font-weight:400;color:#444;transform:scaleY(1.15);transform-origin:left bottom;">PROCESSING</div>
<div class="t" style="left:1131.7px;top:323.33px;font-size:12.6px;line-height:12.6px;font-weight:700;color:#1f3560;letter-spacing:1.3px;">(3)</div>
<div class="t" style="left:1226.5px;top:327.55px;font-size:11.4px;line-height:11.4px;font-weight:400;color:#444;transform:scaleY(1.15);transform-origin:left bottom;">IN-TRANSIT</div>
<div class="t" style="left:1298px;top:323.33px;font-size:12.6px;line-height:12.6px;font-weight:700;color:#1f3560;letter-spacing:1.3px;">(14)</div>
<div class="t" style="left:1394.5px;top:316.51px;font-size:11.8px;line-height:11.8px;font-weight:400;color:#444;transform:scaleY(1.15);transform-origin:left bottom;">READY&nbsp;&nbsp;FOR</div>
<div class="t" style="left:1394.5px;top:331.41px;font-size:11.8px;line-height:11.8px;font-weight:400;color:#444;transform:scaleY(1.15);transform-origin:left bottom;">YOUR REVIEW</div>
<div class="t" style="left:1481.7px;top:323.33px;font-size:12.6px;line-height:12.6px;font-weight:700;color:#1f3560;letter-spacing:1.3px;">(79)</div>
<div class="t" style="left:11.5px;top:408.75px;font-size:11.4px;line-height:11.4px;font-weight:700;color:#3f3f3f;">No</div>
<div class="t" style="left:46.5px;top:408.75px;font-size:11.4px;line-height:11.4px;font-weight:700;color:#3f3f3f;">RepleID</div>
<div class="t" style="left:116.8px;top:408.75px;font-size:11.4px;line-height:11.4px;font-weight:700;color:#3f3f3f;">PO#</div>
<div class="t" style="left:162px;top:408.75px;font-size:11.4px;line-height:11.4px;font-weight:700;color:#3f3f3f;">Supplier</div>
<div class="t" style="left:285px;top:408.75px;font-size:11.4px;line-height:11.4px;font-weight:700;color:#3f3f3f;">Tracking#</div>
<div class="t" style="left:366px;top:408.75px;font-size:11.4px;line-height:11.4px;font-weight:700;color:#3f3f3f;">Status</div>
<div class="t" style="left:564.5px;top:408.75px;font-size:11.4px;line-height:11.4px;font-weight:700;color:#3f3f3f;">Comment</div>
<div class="t" style="left:842.5px;top:408.75px;font-size:11.4px;line-height:11.4px;font-weight:700;color:#3f3f3f;">BOE</div>
<div class="t" style="left:889px;top:408.75px;font-size:11.4px;line-height:11.4px;font-weight:700;color:#3f3f3f;">BL Number</div>
<div class="t" style="left:981px;top:408.75px;font-size:11.4px;line-height:11.4px;font-weight:700;color:#3f3f3f;">Container #</div>
<div class="t" style="left:1076px;top:408.75px;font-size:11.4px;line-height:11.4px;font-weight:700;color:#3f3f3f;">Expected Delivery Date</div>
<div class="t" style="left:1252.5px;top:408.75px;font-size:11.4px;line-height:11.4px;font-weight:700;color:#3f3f3f;">Date Request</div>
<div class="t" style="left:1416px;top:408.75px;font-size:11.4px;line-height:11.4px;font-weight:700;color:#3f3f3f;">Qty pre-sync</div>
<div class="t" style="left:11.8px;top:436.01px;font-size:11.8px;line-height:11.8px;font-weight:400;color:#444;">1</div>
<div class="t" style="left:46.5px;top:436.01px;font-size:11.8px;line-height:11.8px;font-weight:400;color:#3a6ea5;">5</div>
<div class="t" style="left:116.8px;top:436.01px;font-size:11.8px;line-height:11.8px;font-weight:400;color:#444;">5</div>
<div class="t" style="left:162px;top:436.01px;font-size:11.8px;line-height:11.8px;font-weight:400;color:#444;">newSupplier</div>
<div class="t" style="left:1076.2px;top:434.60px;font-size:12.4px;line-height:12.4px;font-weight:400;color:#444;letter-spacing:0.22px;">2024/01/10</div>
<div class="t" style="left:1252.5px;top:434.60px;font-size:12.4px;line-height:12.4px;font-weight:400;color:#444;letter-spacing:0.1px;">2024/01/09 08:40:48</div>
<div class="t" style="left:420.8px;top:440.34px;font-size:12px;line-height:12px;font-weight:400;color:#2e2e2e;">READY&nbsp;&nbsp;FOR</div>
<div class="t" style="left:420.8px;top:454.84px;font-size:12px;line-height:12px;font-weight:400;color:#2e2e2e;letter-spacing:-0.05px;">YOUR REVIEW</div>
<div class="t" style="left:1782.8px;top:443.20px;font-size:13px;line-height:13px;font-weight:400;color:#36659a;">Download</div>
<div class="t" style="left:11.8px;top:492.01px;font-size:11.8px;line-height:11.8px;font-weight:400;color:#444;">2</div>
<div class="t" style="left:46.5px;top:492.01px;font-size:11.8px;line-height:11.8px;font-weight:400;color:#3a6ea5;">7</div>
<div class="t" style="left:116.8px;top:492.01px;font-size:11.8px;line-height:11.8px;font-weight:400;color:#444;">7</div>
<div class="t" style="left:162px;top:492.01px;font-size:11.8px;line-height:11.8px;font-weight:400;color:#444;">newSupplier</div>
<div class="t" style="left:1076.2px;top:490.60px;font-size:12.4px;line-height:12.4px;font-weight:400;color:#444;letter-spacing:0.22px;">2024/01/10</div>
<div class="t" style="left:1252.5px;top:490.60px;font-size:12.4px;line-height:12.4px;font-weight:400;color:#444;letter-spacing:0.1px;">2024/01/09 15:02:40</div>
<div class="t" style="left:420.8px;top:496.34px;font-size:12px;line-height:12px;font-weight:400;color:#2e2e2e;">READY&nbsp;&nbsp;FOR</div>
<div class="t" style="left:420.8px;top:510.84px;font-size:12px;line-height:12px;font-weight:400;color:#2e2e2e;letter-spacing:-0.05px;">YOUR REVIEW</div>
<div class="t" style="left:1782.8px;top:499.20px;font-size:13px;line-height:13px;font-weight:400;color:#36659a;">Download</div>
<div class="t" style="left:11.8px;top:548.01px;font-size:11.8px;line-height:11.8px;font-weight:400;color:#444;">3</div>
<div class="t" style="left:46.5px;top:548.01px;font-size:11.8px;line-height:11.8px;font-weight:400;color:#3a6ea5;">8</div>
<div class="t" style="left:116.8px;top:548.01px;font-size:11.8px;line-height:11.8px;font-weight:400;color:#444;">8</div>
<div class="t" style="left:162px;top:548.01px;font-size:11.8px;line-height:11.8px;font-weight:400;color:#444;">newSupplier</div>
<div class="t" style="left:1076.2px;top:546.60px;font-size:12.4px;line-height:12.4px;font-weight:400;color:#444;letter-spacing:0.22px;">2024/01/10</div>
<div class="t" style="left:1252.5px;top:546.60px;font-size:12.4px;line-height:12.4px;font-weight:400;color:#444;letter-spacing:0.1px;">2024/01/09 15:19:50</div>
<div class="t" style="left:420.8px;top:552.34px;font-size:12px;line-height:12px;font-weight:400;color:#2e2e2e;">READY&nbsp;&nbsp;FOR</div>
<div class="t" style="left:420.8px;top:566.84px;font-size:12px;line-height:12px;font-weight:400;color:#2e2e2e;letter-spacing:-0.05px;">YOUR REVIEW</div>
<div class="t" style="left:1782.8px;top:555.20px;font-size:13px;line-height:13px;font-weight:400;color:#36659a;">Download</div>
<div class="t" style="left:11.8px;top:604.01px;font-size:11.8px;line-height:11.8px;font-weight:400;color:#444;">4</div>
<div class="t" style="left:46.5px;top:604.01px;font-size:11.8px;line-height:11.8px;font-weight:400;color:#3a6ea5;">9</div>
<div class="t" style="left:116.8px;top:604.01px;font-size:11.8px;line-height:11.8px;font-weight:400;color:#444;"></div>
<div class="t" style="left:162px;top:604.01px;font-size:11.8px;line-height:11.8px;font-weight:400;color:#444;"></div>
<div class="t" style="left:1076.2px;top:602.60px;font-size:12.4px;line-height:12.4px;font-weight:400;color:#444;letter-spacing:0.22px;">2024/01/09</div>
<div class="t" style="left:1252.5px;top:602.60px;font-size:12.4px;line-height:12.4px;font-weight:400;color:#444;letter-spacing:0.1px;">2024/01/09 08:54:34</div>
<div class="t" style="left:420.8px;top:608.34px;font-size:12px;line-height:12px;font-weight:400;color:#2e2e2e;">READY&nbsp;&nbsp;FOR</div>
<div class="t" style="left:420.8px;top:622.84px;font-size:12px;line-height:12px;font-weight:400;color:#2e2e2e;letter-spacing:-0.05px;">YOUR REVIEW</div>
<div class="t" style="left:1782.8px;top:611.20px;font-size:13px;line-height:13px;font-weight:400;color:#36659a;">Download</div>
<div class="t" style="left:11.8px;top:660.01px;font-size:11.8px;line-height:11.8px;font-weight:400;color:#444;">5</div>
<div class="t" style="left:46.5px;top:660.01px;font-size:11.8px;line-height:11.8px;font-weight:400;color:#3a6ea5;">10</div>
<div class="t" style="left:116.8px;top:660.01px;font-size:11.8px;line-height:11.8px;font-weight:400;color:#444;">10</div>
<div class="t" style="left:162px;top:660.01px;font-size:11.8px;line-height:11.8px;font-weight:400;color:#444;">newSupplier</div>
<div class="t" style="left:1076.2px;top:658.60px;font-size:12.4px;line-height:12.4px;font-weight:400;color:#444;letter-spacing:0.22px;">2024/01/10</div>
<div class="t" style="left:1252.5px;top:658.60px;font-size:12.4px;line-height:12.4px;font-weight:400;color:#444;letter-spacing:0.1px;">2024/01/09 14:38:22</div>
<div class="t" style="left:420.8px;top:664.34px;font-size:12px;line-height:12px;font-weight:400;color:#2e2e2e;">READY&nbsp;&nbsp;FOR</div>
<div class="t" style="left:420.8px;top:678.84px;font-size:12px;line-height:12px;font-weight:400;color:#2e2e2e;letter-spacing:-0.05px;">YOUR REVIEW</div>
<div class="t" style="left:1782.8px;top:667.20px;font-size:13px;line-height:13px;font-weight:400;color:#36659a;">Download</div>
<div class="t" style="left:11.8px;top:716.01px;font-size:11.8px;line-height:11.8px;font-weight:400;color:#444;">6</div>
<div class="t" style="left:46.5px;top:716.01px;font-size:11.8px;line-height:11.8px;font-weight:400;color:#3a6ea5;">11</div>
<div class="t" style="left:116.8px;top:716.01px;font-size:11.8px;line-height:11.8px;font-weight:400;color:#444;">11</div>
<div class="t" style="left:162px;top:716.01px;font-size:11.8px;line-height:11.8px;font-weight:400;color:#444;">newSupplier</div>
<div class="t" style="left:1076.2px;top:714.60px;font-size:12.4px;line-height:12.4px;font-weight:400;color:#444;letter-spacing:0.22px;">2024/01/10</div>
<div class="t" style="left:1252.5px;top:714.60px;font-size:12.4px;line-height:12.4px;font-weight:400;color:#444;letter-spacing:0.1px;">2024/01/09 17:31:16</div>
<div class="t" style="left:420.8px;top:720.34px;font-size:12px;line-height:12px;font-weight:400;color:#2e2e2e;">READY&nbsp;&nbsp;FOR</div>
<div class="t" style="left:420.8px;top:734.84px;font-size:12px;line-height:12px;font-weight:400;color:#2e2e2e;letter-spacing:-0.05px;">YOUR REVIEW</div>
<div class="t" style="left:1782.8px;top:723.20px;font-size:13px;line-height:13px;font-weight:400;color:#36659a;">Download</div>
<div class="t" style="left:11.8px;top:771.01px;font-size:11.8px;line-height:11.8px;font-weight:400;color:#444;">7</div>
<div class="t" style="left:46.5px;top:771.01px;font-size:11.8px;line-height:11.8px;font-weight:400;color:#3a6ea5;">12</div>
<div class="t" style="left:116.8px;top:771.01px;font-size:11.8px;line-height:11.8px;font-weight:400;color:#444;">12</div>
<div class="t" style="left:162px;top:771.01px;font-size:11.8px;line-height:11.8px;font-weight:400;color:#444;">newSupplier</div>
<div class="t" style="left:1076.2px;top:769.60px;font-size:12.4px;line-height:12.4px;font-weight:400;color:#444;letter-spacing:0.22px;">2024/01/10</div>
<div class="t" style="left:1252.5px;top:769.60px;font-size:12.4px;line-height:12.4px;font-weight:400;color:#444;letter-spacing:0.1px;">2024/01/09 17:38:18</div>
<div class="t" style="left:420.8px;top:775.34px;font-size:12px;line-height:12px;font-weight:400;color:#2e2e2e;">READY&nbsp;&nbsp;FOR</div>
<div class="t" style="left:420.8px;top:789.84px;font-size:12px;line-height:12px;font-weight:400;color:#2e2e2e;letter-spacing:-0.05px;">YOUR REVIEW</div>
<div class="t" style="left:1782.8px;top:778.20px;font-size:13px;line-height:13px;font-weight:400;color:#36659a;">Download</div>
<div class="t" style="left:11.8px;top:827.01px;font-size:11.8px;line-height:11.8px;font-weight:400;color:#444;">8</div>
<div class="t" style="left:46.5px;top:827.01px;font-size:11.8px;line-height:11.8px;font-weight:400;color:#3a6ea5;">13</div>
<div class="t" style="left:116.8px;top:827.01px;font-size:11.8px;line-height:11.8px;font-weight:400;color:#444;">13</div>
<div class="t" style="left:162px;top:827.01px;font-size:11.8px;line-height:11.8px;font-weight:400;color:#444;">newSupplier</div>
<div class="t" style="left:1076.2px;top:825.60px;font-size:12.4px;line-height:12.4px;font-weight:400;color:#444;letter-spacing:0.22px;">2024/01/10</div>
<div class="t" style="left:1252.5px;top:825.60px;font-size:12.4px;line-height:12.4px;font-weight:400;color:#444;letter-spacing:0.1px;">2024/01/09 17:56:24</div>
<div class="t" style="left:420.8px;top:831.34px;font-size:12px;line-height:12px;font-weight:400;color:#2e2e2e;">READY&nbsp;&nbsp;FOR</div>
<div class="t" style="left:420.8px;top:845.84px;font-size:12px;line-height:12px;font-weight:400;color:#2e2e2e;letter-spacing:-0.05px;">YOUR REVIEW</div>
<div class="t" style="left:1782.8px;top:834.20px;font-size:13px;line-height:13px;font-weight:400;color:#36659a;">Download</div>
<div class="t" style="left:11.8px;top:883.01px;font-size:11.8px;line-height:11.8px;font-weight:400;color:#444;">9</div>
<div class="t" style="left:46.5px;top:883.01px;font-size:11.8px;line-height:11.8px;font-weight:400;color:#3a6ea5;">14</div>
<div class="t" style="left:116.8px;top:883.01px;font-size:11.8px;line-height:11.8px;font-weight:400;color:#444;">14</div>
<div class="t" style="left:162px;top:883.01px;font-size:11.8px;line-height:11.8px;font-weight:400;color:#444;">newSupplier</div>
<div class="t" style="left:1076.2px;top:881.60px;font-size:12.4px;line-height:12.4px;font-weight:400;color:#444;letter-spacing:0.22px;">2024/01/11</div>
<div class="t" style="left:1252.5px;top:881.60px;font-size:12.4px;line-height:12.4px;font-weight:400;color:#444;letter-spacing:0.1px;">2024/01/09 18:06:03</div>
<div class="t" style="left:420.8px;top:887.34px;font-size:12px;line-height:12px;font-weight:400;color:#2e2e2e;">READY&nbsp;&nbsp;FOR</div>
<div class="t" style="left:420.8px;top:901.84px;font-size:12px;line-height:12px;font-weight:400;color:#2e2e2e;letter-spacing:-0.05px;">YOUR REVIEW</div>
<div class="t" style="left:1782.8px;top:890.20px;font-size:13px;line-height:13px;font-weight:400;color:#36659a;">Download</div>
<div class="r" style="left:1904px;top:0px;width:15px;height:934px;background:#2b2b2b"></div><div class="r" style="left:1907px;top:19px;width:9px;height:482px;background:#a3a3a3;border-radius:4.5px"></div>
<div class="r" style="left:1783px;top:868px;width:103px;height:46px;background:#1879b4;border-radius:23px 6px 23px 23px"></div>
<svg class="ov" width="1919" height="934" viewBox="0 0 1919 934"><circle cx="1805" cy="890.4" r="9.4" fill="none" stroke="#fff" stroke-width="1.5"/><path d="M1907 11.9 L1911.5 6.7 L1916 11.9 Z" fill="#a3a3a3"/><path d="M1907 921.9 L1911.5 926.8 L1916 921.9 Z" fill="#a3a3a3"/></svg>
<div class="t" style="left:1505px;width:600px;text-align:center;top:883.65px;font-size:14px;line-height:14px;font-weight:400;color:#fff;">?</div>
<div class="t" style="left:1825px;top:879.27px;font-size:20px;line-height:20px;font-weight:700;color:#fff;letter-spacing:-0.4px;">Help</div>
</body></html>
